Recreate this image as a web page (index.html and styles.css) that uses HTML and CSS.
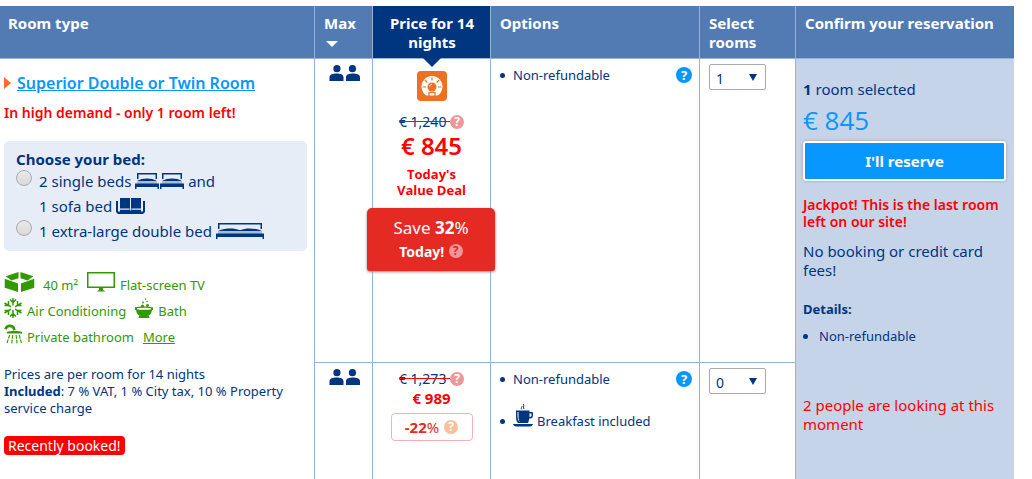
FILE: index.html
```html
<!DOCTYPE html>
<html lang="en">
<head>
<meta charset="utf-8">
<title>Room availability</title>
<link rel="stylesheet" href="styles.css">
</head>
<body>
<svg class="sprite" aria-hidden="true">
  <symbol id="people" viewBox="0 0 31 16">
    <path d="M8 0a3.600 3.600 0 1 1-.1 7.200A3.600 3.600 0 0 1 8 0zM23.500 0a3.600 3.600 0 1 1-.1 7.200A3.600 3.600 0 0 1 23.500 0zM.5 16v-4C.5 9.500 4 8.500 7.500 8.500s7 1 7 3.500v4zM17 16v-4c0-2.500 3.500-3.500 7-3.500s7 1 7 3.500v4z"/>
  </symbol>
  <symbol id="single-bed" viewBox="0 0 24 16">
    <path d="M2 0h20v6h-1.500V1.500h-17V6H2z"/>
    <path d="M2 8C5 6.300 8 5.500 12 5.500s7 .8 10 2.500z"/>
    <path class="sheet" d="M2 8h20v3H2z"/>
    <path d="M0 10.500h24V16h-1.500v-2h-21v2H0z"/>
  </symbol>
  <symbol id="double-bed" viewBox="0 0 48 16">
    <path d="M2 0h44v6h-1.500V1.500h-41V6H2z"/>
    <path d="M2 8c4-2 9-2.500 13-2.500 5 0 7 1.500 9 1.500s4-1.500 9-1.500c4 0 9 .5 13 2.500z"/>
    <path class="sheet" d="M2 8h44v3H2z"/>
    <path d="M0 10.500h48V16h-1.500v-2h-45v2H0z"/>
  </symbol>
  <symbol id="sofa" viewBox="0 0 29 16">
    <path d="M0 3h2v10.500h2V0h21v13.500h2V3h2v11l-2 2H2l-2-2z"/>
    <path class="seam" d="M14 0h1v12.500h-1zM4 10.500h9.500v1.200H4zM15.500 10.500H25v1.200h-9.500z"/>
  </symbol>
  <symbol id="area" viewBox="0 0 31 21">
    <path d="M1 4.500L14.500 0v6.500L7 9zM30 4.500L16.500 0v6.500L24 9zM0 7l14 5v9L0 16.500zM31 7l-14 5v9l14-4.500z"/>
  </symbol>
  <symbol id="tv" viewBox="0 0 28 20">
    <path d="M0 0h28v16H0zM1.500 1.500v13h25v-13z" fill-rule="evenodd"/>
    <path d="M12 16h4v2l2.500 1.500h-9L12 18z"/>
  </symbol>
  <symbol id="snow" viewBox="0 0 18 20">
    <path class="line" d="M9 0v7.500M9 12v8M.5 5l6.500 3.800M17.500 5L11 8.800M.5 15L7 11.200M17.500 15L11 11.200M6 1.500l3 3 3-3M6 18.500l3-3 3 3M4.500 3v4.500H.5M13.500 3v4.500h4M4.500 17v-4.500H.5M13.500 17v-4.500h4"/>
  </symbol>
  <symbol id="bath" viewBox="0 0 18 20">
    <path d="M0 9.500C2 8 16 8 18 9.500V12h-1c-.5 3.500-2 5-3.500 5.500L14.500 20h-11l1-2.500C3 17 1.500 15.500 1 12H0z"/>
    <path class="gap" d="M2 10.300C4 9.500 14 9.500 16 10.300v1C14 12 4 12 2 11.300z"/>
    <circle cx="7.500" cy="8" r="1.500"/><circle cx="12.500" cy="7.500" r="1.400"/><circle cx="8" cy="4.500" r=".9"/><circle cx="12" cy="3.500" r=".8"/><circle cx="10.500" cy="1" r=".8"/>
  </symbol>
  <symbol id="shower" viewBox="0 0 19 20">
    <path class="thick" d="M1.500 5C2.500 2.500 4 1.500 6 1.500c3 0 4.500 1.500 5 4.500"/>
    <path d="M3 8C6 6.500 15 6.500 19 8v1.500H3z"/>
    <path class="rain" d="M6 11l-3 9M9.200 11l-1 9M12.800 11l1 9M16 11l2.500 9"/>
  </symbol>
  <symbol id="cup" viewBox="0 0 20 23">
    <path d="M3 6.500h13.500V8H19a1 1 0 0 1 1 1v3a3 3 0 0 1-3 2.500h-.8c-.2 2.500-.7 3.500-1.200 4.500H5c-1.200-1-2-3-2-6.500zM16.500 9.500V13c1.500 0 2-.8 2-1.500v-2z" fill-rule="evenodd"/>
    <path class="gap" d="M4.500 8h1v6l1 4c-1.200-1-2-4-2-5.500z"/>
    <path d="M0 20h20c-.5 1.500-1.500 2.500-3 2.500H3C1.500 22.500.5 21.500 0 20z"/>
    <path class="steam" d="M9 5.500c-2-1.500.5-2.500 0-3.500M11 5c-1.500-1.500.5-2.500-.5-5"/>
  </symbol>
  <symbol id="deal" viewBox="0 0 30 30">
    <rect width="30" height="30" rx="4" fill="#ee7023"/>
    <path d="M9.500 24.500a10.500 10.500 0 1 1 11 0z" fill="#fff"/>
    <circle cx="15" cy="16" r="4.500" fill="#ee7023"/>
    <path d="M12.500 15.500a3 3 0 0 1 2.500-2.300" fill="none" stroke="#fff" stroke-width=".8"/>
    <path d="M15 6.500v3M8 9l2.300 2.500M22 9l-2.300 2.500M5.500 16H9M24.500 16H21M12 21.500h6v3.500h-6z" stroke="#ee7023" stroke-width="1.200" fill="#fff"/>
  </symbol>
</svg>

<table class="rooms">
  <colgroup>
    <col class="col-type"><col class="col-max"><col class="col-price"><col class="col-options"><col class="col-select"><col class="col-confirm">
  </colgroup>
  <thead>
    <tr>
      <th>Room type</th>
      <th>Max<span class="sort"></span></th>
      <th class="price-head">Price for 14 nights</th>
      <th>Options</th>
      <th>Select rooms</th>
      <th>Confirm your reservation</th>
    </tr>
  </thead>
  <tbody>
    <tr class="first-offer">
      <td class="room" rowspan="2">
        <div class="title"><a href="#">Superior Double or Twin Room</a></div>
        <p class="demand">In high demand - only 1 room left!</p>
        <fieldset class="beds">
          <legend>Choose your bed:</legend>
          <div class="bed">
            <input type="radio" name="bed" id="bed-single">
            <label for="bed-single">2 single beds <svg class="i-single"><use href="#single-bed"/></svg><svg class="i-single"><use href="#single-bed"/></svg> and<br>1 sofa bed <svg class="i-sofa"><use href="#sofa"/></svg></label>
          </div>
          <div class="bed">
            <input type="radio" name="bed" id="bed-double">
            <label for="bed-double">1 extra-large double bed <svg class="i-double"><use href="#double-bed"/></svg></label>
          </div>
        </fieldset>
        <div class="facilities">
          <div class="line-up"><span><svg class="i-area"><use href="#area"/></svg>40 m²</span><span><svg class="i-tv"><use href="#tv"/></svg>Flat-screen TV</span></div>
          <div class="line-up"><span><svg class="i-small"><use href="#snow"/></svg>Air Conditioning</span><span><svg class="i-small"><use href="#bath"/></svg>Bath</span></div>
          <div class="line-up"><span><svg class="i-small"><use href="#shower"/></svg>Private bathroom</span><a href="#">More</a></div>
        </div>
        <p class="included">Prices are per room for 14 nights<br><b>Included</b>: 7 % VAT, 1 % City tax, 10 % Property service charge</p>
        <span class="booked">Recently booked!</span>
      </td>
      <td class="max"><svg class="i-people" role="img" aria-label="2 people"><use href="#people"/></svg></td>
      <td class="price">
        <svg class="i-deal"><use href="#deal"/></svg>
        <div class="was was-deal"><del>€ 1,240 </del><button class="help">?</button></div>
        <div class="now-big">€ 845</div>
        <div class="value">Today's<br>Value Deal</div>
        <div class="save">Save <b>32</b>%<br><strong>Today!</strong> <button class="help">?</button></div>
      </td>
      <td class="options">
        <ul><li><span>Non-refundable</span><button class="help help-blue">?</button></li></ul>
      </td>
      <td class="select"><span class="drop"><select aria-label="Rooms, non-refundable"><option>0</option><option selected>1</option></select></span></td>
      <td class="confirm" rowspan="2">
        <p class="selected"><b>1</b> room selected</p>
        <div class="total">€ 845</div>
        <button class="reserve">I'll reserve</button>
        <p class="jackpot">Jackpot! This is the last room left on our site!</p>
        <p class="fees">No booking or credit card fees!</p>
        <h2>Details:</h2>
        <ul><li>Non-refundable</li></ul>
        <p class="looking">2 people are looking at this moment</p>
      </td>
    </tr>
    <tr>
      <td class="max"><svg class="i-people" role="img" aria-label="2 people"><use href="#people"/></svg></td>
      <td class="price">
        <div class="was"><del>€ 1,273 </del><button class="help">?</button></div>
        <div class="now">€ 989</div>
        <div class="discount"><span><b>-22</b>%</span><button class="help help-orange">?</button></div>
      </td>
      <td class="options">
        <ul>
          <li><span>Non-refundable</span><button class="help help-blue">?</button></li>
          <li class="breakfast"><svg class="i-cup"><use href="#cup"/></svg><span>Breakfast included</span></li>
        </ul>
      </td>
      <td class="select"><span class="drop"><select aria-label="Rooms, breakfast included"><option selected>0</option><option>1</option></select></span></td>
    </tr>
  </tbody>
</table>
</body>
</html>
```

FILE: styles.css
```css
* { box-sizing: border-box; }
body {
  margin: 0;
  padding: 6px 18px 0 0;
  background: #fff;
  color: #003580;
  font: 13px/18px "Noto Sans", "Open Sans", sans-serif;
}
p, ul, h2 { margin: 0; padding: 0; }
button { padding: 0; border: 0; font-family: inherit; cursor: pointer; }
svg { fill: #003580; }
.sprite { position: absolute; width: 0; height: 0; }

.rooms {
  width: 100%;
  height: calc(100vh - 6px);
  table-layout: fixed;
  border-collapse: separate;
  border-spacing: 0;
}
.col-max { width: 58px; }
.col-price { width: 118px; }
.col-options { width: 209px; }
.col-select { width: 96px; }
.col-confirm { width: 219px; }

th {
  height: 53px;
  padding: 8px 8px 5px 9px;
  border-left: 1px solid #97b3dd;
  border-bottom: 1px solid #97b3dd;
  background: #527bb4;
  color: #fff;
  font-size: 15px;
  font-weight: 700;
  line-height: 19px;
  text-align: left;
  vertical-align: top;
}
th:first-child { padding-left: 8px; border-left: 0; }
.price-head {
  position: relative;
  background: #003580;
  text-align: center;
}
.price-head::after {
  content: "";
  position: absolute;
  top: 52px;
  left: calc(50% - 9px);
  border: 9px solid transparent;
  border-top-color: #003580;
  border-bottom: 0;
}
.sort {
  display: block;
  width: 12px;
  margin: 8px 0 0 2px;
  border: 6px solid transparent;
  border-top-color: #fff;
  border-bottom: 0;
}

td {
  padding: 0;
  border-left: 1px solid #97b3dd;
  vertical-align: top;
}
.first-offer { height: 304px; }
.first-offer .max, .first-offer .price, .first-offer .options, .first-offer .select { border-bottom: 1px solid #97b3dd; }

.room { padding: 14px 7px 0 4px; border-left: 0; }
.title { display: flex; align-items: center; gap: 6px; font-size: 16px; font-weight: 600; line-height: 20px; }
.title::before {
  content: "";
  border: 6px solid transparent;
  border-left: 7px solid #ff6a2a;
  border-right: 0;
}
.title a { color: #0896ff; }
.demand { margin-top: 11px; color: #f00; font-size: 14px; font-weight: 600; }
.beds {
  margin: 19px 0 0;
  padding: 8px 12px 7px;
  border: 0;
  border-radius: 5px;
  background: #e6edf6;
  font-size: 15px;
  line-height: 25px;
}
.beds legend { float: left; width: 100%; padding: 0; font-weight: 700; line-height: 20px; }
.bed { clear: both; display: flex; gap: 7px; }
.bed input {
  appearance: none;
  flex: none;
  width: 16px;
  height: 16px;
  margin: 1px 0 0;
  border: 1px solid #aaa;
  border-radius: 50%;
  background: linear-gradient(#e8e8e8, #dadada);
}
.bed svg { height: 16px; vertical-align: -2px; }
.i-single { width: 24px; }
.i-single + .i-single { margin-left: 1px; }
.i-sofa { width: 29px; }
.i-double { width: 48px; }
.sheet { fill: #a9bcd4; }
.seam { fill: #e6edf6; }

.facilities { margin-top: 21px; color: #390; line-height: 26px; }
.facilities svg { height: 20px; margin-right: 5px; fill: #390; vertical-align: -2px; }
.facilities a { color: #390; }
.line-up { display: flex; gap: 9px; height: 26px; white-space: nowrap; }
.facilities .i-area { width: 31px; margin-right: 8px; }
.i-tv { width: 28px; }
.i-small { width: 18px; }
.gap { fill: #fff; }
.line { fill: none; stroke: currentColor; stroke-width: 1.500; }
.steam { fill: none; stroke: currentColor; stroke-width: 1; }
.thick { fill: none; stroke: currentColor; stroke-width: 2.800; }
.rain { fill: none; stroke: currentColor; stroke-width: 1.200; stroke-dasharray: 4 1; }

.included { margin-top: 16px; line-height: 17px; }
.booked {
  display: inline-block;
  margin-top: 19px;
  padding: 0 4px;
  border-radius: 4px;
  background: #f00;
  color: #fff;
  font-size: 14px;
  line-height: 19px;
}

.max { padding: 6px 0 0 14px; }
.i-people { display: block; width: 31px; height: 16px; }

.price { padding-top: 7px; text-align: center; }
.i-deal { display: block; width: 30px; height: 30px; margin: 5px auto 0; }
.was { display: flex; justify-content: center; align-items: center; font-size: 14px; line-height: 18px; }
.was-deal { margin-top: 12px; }
.was del { white-space: pre; text-decoration-color: #f00; }
.help {
  width: 14px;
  height: 14px;
  border-radius: 50%;
  background: #ef9698;
  color: #fff;
  font-size: 12px;
  font-weight: 700;
  line-height: 14px;
  text-align: center;
}
.now-big { margin-top: 2px; color: #f00; font-size: 24px; font-weight: 600; line-height: 26px; }
.value { margin-top: 7px; color: #f00; font-family: "Open Sans", sans-serif; font-weight: 700; line-height: 16px; }
.save {
  position: relative;
  margin: 10px -5px 0 -6px;
  padding: 8px 0;
  border-radius: 5px 5px 3px 3px;
  background: #e52923;
  box-shadow: 0 1px 3px #888;
  color: #fff;
  font-size: 17px;
  line-height: 23px;
}
.save strong { font-size: 14px; }
.save .help { color: #e52923; vertical-align: 2px; }
.now { color: #f00; font-size: 15px; font-weight: 700; line-height: 20px; }
.discount {
  display: flex;
  justify-content: center;
  align-items: center;
  gap: 5px;
  width: 82px;
  height: 28px;
  margin: 5px auto 0;
  border: 1px solid #f4b3b0;
  border-radius: 4px;
  color: #e52923;
  font-size: 15px;
}
.help-orange { background: #f8c19c; }

.options { padding: 7px 7px 0 9px; }
.options ul { list-style: none; }
.options li { display: flex; align-items: center; line-height: 18px; }
.options li::before {
  content: "";
  width: 5px;
  height: 5px;
  margin-right: 8px;
  border-radius: 50%;
  background: #003580;
}
.help-blue { width: 16px; height: 16px; margin-left: auto; background: #0896ff; font-size: 13px; line-height: 16px; }
.options .breakfast { margin-top: 24px; }
.i-cup { width: 20px; height: 23px; margin: -8px 4px 3px 0; }

.select { padding: 5px 0 0 9px; }
.drop { position: relative; display: inline-block; }
.drop::after {
  content: "";
  position: absolute;
  top: 10px;
  right: 9px;
  border: 4px solid transparent;
  border-top: 7px solid #003580;
  border-bottom: 0;
  pointer-events: none;
}
select {
  appearance: none;
  display: block;
  width: 57px;
  height: 26px;
  padding: 2px 6px 0;
  border: 1px solid #a9a9a9;
  border-radius: 2px;
  background: #fff;
  color: #003580;
  font: 14px "Noto Sans", sans-serif;
}

.confirm { padding: 20px 8px 0 7px; background: #c6d4e9; }
.selected { font-size: 15px; line-height: 20px; }
.total { margin-top: 4px; color: #0896ff; font-family: "Open Sans", sans-serif; font-size: 26px; line-height: 34px; }
.reserve {
  display: block;
  width: 100%;
  height: 40px;
  margin-top: 4px;
  border: 2px solid #fff;
  border-radius: 3px;
  background: #0896ff;
  box-shadow: 0 0 3px #999;
  color: #fff;
  font-size: 15px;
  font-weight: 700;
}
.jackpot { margin-top: 15px; color: #f00; font-size: 14px; font-weight: 600; line-height: 17px; }
.fees { margin-top: 12px; font-size: 15px; line-height: 19px; }
.confirm h2 { margin-top: 20px; font-size: 13px; line-height: 18px; }
.confirm ul { margin-top: 9px; padding-left: 16px; }
.looking { margin-top: 51px; color: #f00; font-size: 15px; line-height: 19px; }
```
